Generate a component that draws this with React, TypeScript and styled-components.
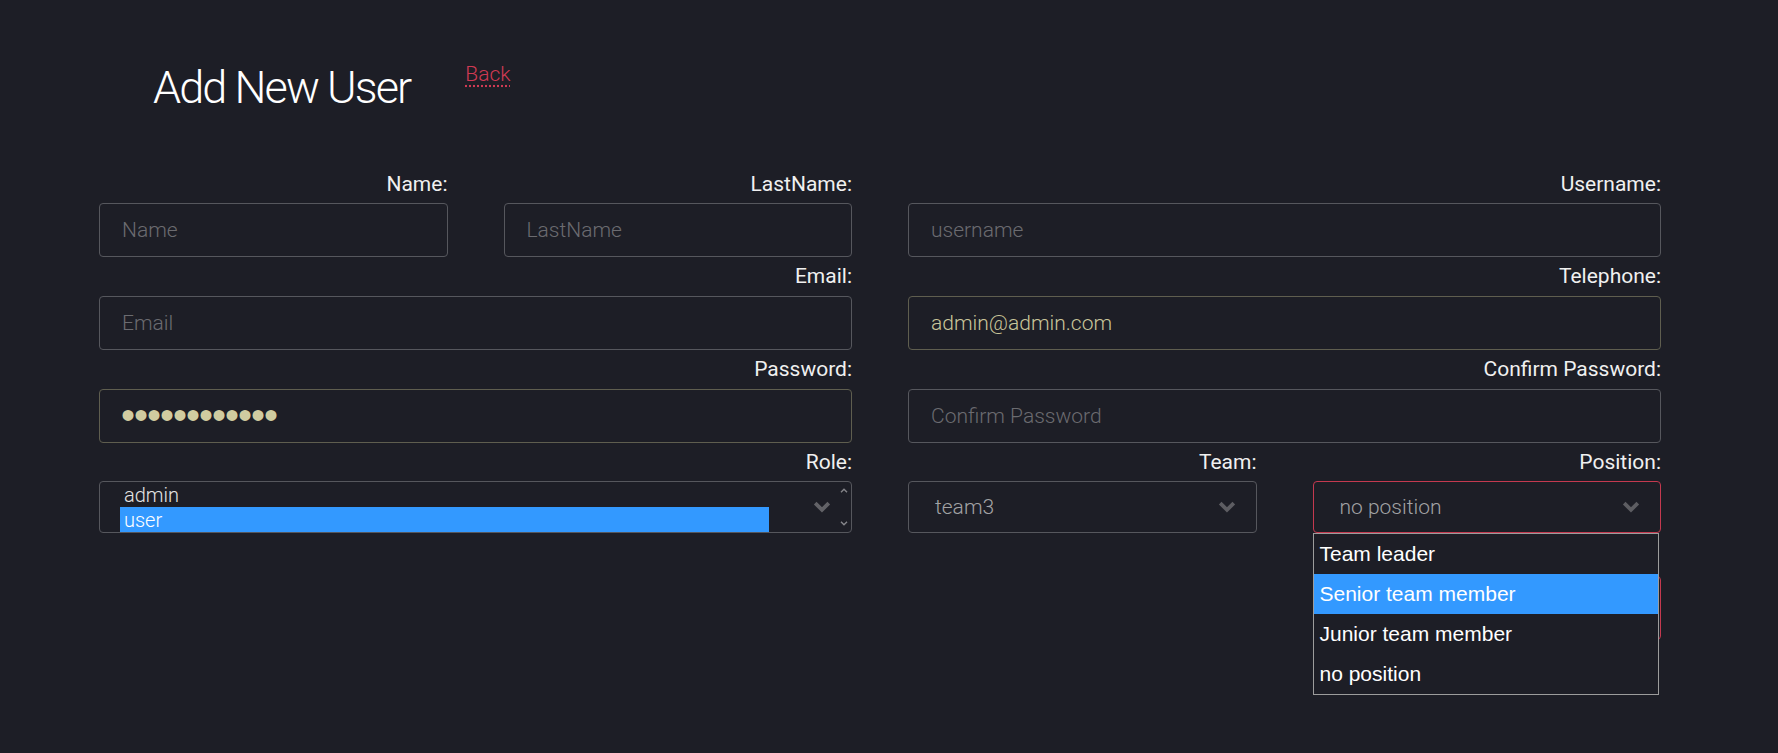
import React from "react";
import styled, { createGlobalStyle } from "styled-components";

const GlobalStyle = createGlobalStyle`
  html, body {
    margin: 0;
    padding: 0;
    background: #1d1e26;
  }
  body {
    font-family: Roboto, "Liberation Sans", sans-serif;
    color: #f2f2f2;
    overflow: hidden;
  }
  * { box-sizing: border-box; }
`;

const Page = styled.div`
  width: 1778px;
  height: 753px;
  background: #1d1e26;
  padding-top: 61px;
  overflow: hidden;
`;

const Header = styled.header`
  display: flex;
  align-items: flex-start;
  gap: 55px;
  padding-left: 153px;
  height: 103.6px;
`;

const Title = styled.h1`
  margin: 0;
  font-family: Roboto, sans-serif;
  font-weight: 300;
  font-size: 45px;
  line-height: 53px;
  letter-spacing: -1.9px;
  color: #ffffff;
`;

const BackLink = styled.a`
  margin-top: 1px;
  font-family: Roboto, sans-serif;
  font-weight: 300;
  font-size: 21px;
  line-height: 25px;
  color: #cf3a53;
  text-decoration: underline dotted #cf3a53;
  text-underline-offset: 4px;
  cursor: pointer;
`;

const Form = styled.form`
  display: grid;
  grid-template-columns: repeat(4, 348.5px);
  column-gap: 56px;
  margin-left: 99px;
  width: 1562px;
`;

const Field = styled.div<{ $col: string; $relative?: boolean }>`
  grid-column: ${(p) => p.$col};
  display: flex;
  flex-direction: column;
  position: ${(p) => (p.$relative ? "relative" : "static")};
`;

const Label = styled.label`
  display: block;
  height: 38.4px;
  line-height: 38.4px;
  text-align: right;
  font-family: Roboto, sans-serif;
  font-weight: 400;
  font-size: 21px;
  color: #f0f0f0;
`;

const TextInput = styled.input<{ $filled?: boolean }>`
  width: 100%;
  height: 54.4px;
  margin: 0;
  padding: 0 22px;
  border: 1px solid ${(p) => (p.$filled ? "#5f5e4f" : "#56575d")};
  border-radius: 4px;
  background: transparent;
  font-family: Roboto, sans-serif;
  font-weight: 300;
  font-size: 21px;
  color: #c9c59a;
  outline: none;
  &::placeholder {
    color: #6b6b70;
    opacity: 1;
  }
`;

const PasswordInput = styled(TextInput)`
  padding: 0 21px;
  font-family: "Liberation Sans", Arial, sans-serif;
  font-weight: 400;
  font-size: 40px;
  letter-spacing: -1px;
  color: #d0cca0;
`;

const ListBox = styled.div`
  position: relative;
  display: flex;
  height: 52px;
  border: 1px solid #56575d;
  border-radius: 4px;
  overflow: hidden;
`;

const ListOptions = styled.div`
  flex: 1;
  display: flex;
  flex-direction: column;
  padding: 0 68px 0 20px;
`;

const ListOption = styled.div<{ $selected?: boolean }>`
  height: 25px;
  line-height: 26px;
  padding-left: 4px;
  font-family: Roboto, sans-serif;
  font-weight: 300;
  font-size: 20px;
  color: ${(p) => (p.$selected ? "#ffffff" : "#e4e4e4")};
  background: ${(p) => (p.$selected ? "#3399ff" : "transparent")};
`;

const ScrollTrack = styled.div`
  width: 14px;
  display: flex;
  flex-direction: column;
  justify-content: space-between;
  align-items: center;
  padding: 6px 0 6px;
`;

const ListChevron = styled.span`
  position: absolute;
  right: 20px;
  top: 19px;
  display: flex;
`;

const SelectBox = styled.div<{ $invalid?: boolean }>`
  height: 52px;
  display: flex;
  align-items: center;
  justify-content: space-between;
  padding: 0 20px 0 26px;
  border: 1px solid ${(p) => (p.$invalid ? "#c4394f" : "#56575d")};
  border-radius: 4px;
  font-family: Roboto, sans-serif;
  font-weight: 300;
  font-size: 21px;
  color: #a2a2a4;
`;

const DropList = styled.ul`
  position: absolute;
  top: 100%;
  left: 0;
  width: calc(100% - 2px);
  margin: 0;
  padding: 0;
  list-style: none;
  border: 1px solid #9c9c9c;
  background: #1d1e26;
  z-index: 10;
`;

const DropItem = styled.li<{ $active?: boolean }>`
  height: 40px;
  line-height: 40px;
  padding-left: 6px;
  font-family: "Liberation Sans", Arial, sans-serif;
  font-size: 21px;
  color: #ffffff;
  background: ${(p) => (p.$active ? "#3399ff" : "transparent")};
`;

const SubmitButton = styled.button`
  grid-column: 4;
  margin-top: 42.6px;
  height: 64px;
  border: 1px solid #c4394f;
  border-radius: 4px;
  background: transparent;
`;

const Chevron = ({ color = "#5d5d62" }: { color?: string }) => (
  <svg width="18" height="12" viewBox="0 0 18 12">
    <path d="M2.2 2.2 L9 8.8 L15.8 2.2" fill="none" stroke={color} strokeWidth="3.8" />
  </svg>
);

const ScrollArrow = ({ up }: { up?: boolean }) => (
  <svg width="8" height="5" viewBox="0 0 8 5">
    <path
      d={up ? "M1 4.2 L4 1.2 L7 4.2" : "M1 0.8 L4 3.8 L7 0.8"}
      fill="none"
      stroke="#85858a"
      strokeWidth="1.4"
    />
  </svg>
);

export default function App() {
  return (
    <>
      <GlobalStyle />
      <Page>
        <Header>
          <Title>Add New User</Title>
          <BackLink>Back</BackLink>
        </Header>
        <Form onSubmit={(e) => e.preventDefault()}>
          <Field $col="1">
            <Label>Name:</Label>
            <TextInput placeholder="Name" />
          </Field>
          <Field $col="2">
            <Label>LastName:</Label>
            <TextInput placeholder="LastName" />
          </Field>
          <Field $col="3 / 5">
            <Label>Username:</Label>
            <TextInput placeholder="username" />
          </Field>

          <Field $col="1 / 3">
            <Label>Email:</Label>
            <TextInput placeholder="Email" />
          </Field>
          <Field $col="3 / 5">
            <Label>Telephone:</Label>
            <TextInput $filled defaultValue="admin@admin.com" />
          </Field>

          <Field $col="1 / 3">
            <Label>Password:</Label>
            <PasswordInput $filled type="password" defaultValue="adminadmin12" />
          </Field>
          <Field $col="3 / 5">
            <Label>Confirm Password:</Label>
            <TextInput placeholder="Confirm Password" />
          </Field>

          <Field $col="1 / 3">
            <Label>Role:</Label>
            <ListBox>
              <ListOptions>
                <ListOption>admin</ListOption>
                <ListOption $selected>user</ListOption>
              </ListOptions>
              <ListChevron>
                <Chevron color="#626267" />
              </ListChevron>
              <ScrollTrack>
                <ScrollArrow up />
                <ScrollArrow />
              </ScrollTrack>
            </ListBox>
          </Field>
          <Field $col="3">
            <Label>Team:</Label>
            <SelectBox>
              <span>team3</span>
              <Chevron />
            </SelectBox>
          </Field>
          <Field $col="4" $relative>
            <Label>Position:</Label>
            <SelectBox $invalid>
              <span>no position</span>
              <Chevron />
            </SelectBox>
            <DropList>
              <DropItem>Team leader</DropItem>
              <DropItem $active>Senior team member</DropItem>
              <DropItem>Junior team member</DropItem>
              <DropItem>no position</DropItem>
            </DropList>
          </Field>
          <SubmitButton type="submit" aria-label="Add User" />
        </Form>
      </Page>
    </>
  );
}
